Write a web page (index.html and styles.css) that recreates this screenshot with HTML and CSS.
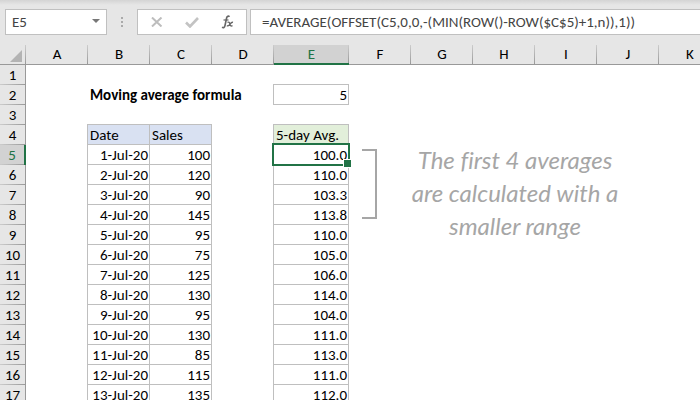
FILE: index.html
```html
<!DOCTYPE html>
<html lang="en">
<head>
    <meta charset="UTF-8">
    <meta name="viewport" content="width=device-width, initial-scale=1.0">
    <title>Moving average formula</title>
    <link rel="stylesheet" href="styles.css">
</head>
<body>
    <div class="formula-bar">
        <div class="namebox">
            <input type="text" class="name-input" value="E5" aria-label="Name box">
            <button type="button" class="name-arrow" aria-label="Show names">
                <svg width="8" height="4" viewBox="0 0 8 4"><path d="M0 0h8L4 4z" fill="#777"/></svg>
            </button>
        </div>
        <svg class="dots" width="2" height="10" viewBox="0 0 2 10" fill="#aaa"><path d="M0 0h2v2H0zM0 4h2v2H0zM0 8h2v2H0z"/></svg>
        <div class="tools">
            <button type="button" aria-label="Cancel">
                <svg width="12" height="10" viewBox="0 0 12 10"><path d="M1 .5l9.500 9M10.500 .5l-9.500 9" stroke="#bdbdbd" stroke-width="2" fill="none"/></svg>
            </button>
            <button type="button" aria-label="Enter">
                <svg width="14" height="11" viewBox="0 0 14 11"><path d="M1 5.500l4 4L13 1" stroke="#c3c3c3" stroke-width="2.600" fill="none"/></svg>
            </button>
            <button type="button" aria-label="Insert function">
                <svg width="13" height="14" viewBox="0 0 13 14" fill="none" stroke="#666"><path d="M8.500 1.800C7.500 .5 6 1 5.600 3L4 10.500C3.600 12.600 2.500 13 1 12.200" stroke-width="1.600"/><path d="M2.500 5h5" stroke-width="1.200"/><path d="M6.500 7.300c1.400-.6 2 .2 2.300 1.700s1 2.500 2.700 1.700M12 7.300c-1.500-.4-2.200.7-3.200 2S7 11.300 5.800 10.700" stroke-width="1.300"/></svg>
            </button>
        </div>
        <input type="text" class="formula-input" value="=AVERAGE(OFFSET(C5,0,0,-(MIN(ROW()-ROW($C$5)+1,n)),1))" aria-label="Formula">
    </div>

    <div class="sheet">
        <table>
            <colgroup>
                <col class="col-head">
                <col span="4">
                <col class="col-wide">
                <col span="6">
            </colgroup>
            <thead>
                <tr>
                    <th class="corner"><svg width="12" height="12" viewBox="0 0 12 12"><path d="M12 0v12H0z" fill="#b3b3b3"/></svg></th>
                    <th>A</th><th>B</th><th>C</th><th>D</th><th class="active">E</th><th>F</th><th>G</th><th>H</th><th>I</th><th>J</th><th>K</th>
                </tr>
            </thead>
            <tbody>
                <tr><th>1</th><td colspan="11"></td></tr>
                <tr><th>2</th><td></td><td colspan="3" class="title">Moving average formula</td><td class="data">5</td><td colspan="6"></td></tr>
                <tr><th>3</th><td colspan="11"></td></tr>
                <tr><th>4</th><td></td><td class="data label blue">Date</td><td class="data label blue">Sales</td><td></td><td class="data label green">5-day Avg.</td><td colspan="6"></td></tr>
                <tr><th class="active">5</th><td></td><td class="data">1-Jul-20</td><td class="data">100</td><td></td><td class="data selected">100.0<span class="selection"></span></td><td colspan="6"></td></tr>
                <tr><th>6</th><td></td><td class="data">2-Jul-20</td><td class="data">120</td><td></td><td class="data">110.0</td><td colspan="6"></td></tr>
                <tr><th>7</th><td></td><td class="data">3-Jul-20</td><td class="data">90</td><td></td><td class="data">103.3</td><td colspan="6"></td></tr>
                <tr><th>8</th><td></td><td class="data">4-Jul-20</td><td class="data">145</td><td></td><td class="data">113.8</td><td colspan="6"></td></tr>
                <tr><th>9</th><td></td><td class="data">5-Jul-20</td><td class="data">95</td><td></td><td class="data">110.0</td><td colspan="6"></td></tr>
                <tr><th>10</th><td></td><td class="data">6-Jul-20</td><td class="data">75</td><td></td><td class="data">105.0</td><td colspan="6"></td></tr>
                <tr><th>11</th><td></td><td class="data">7-Jul-20</td><td class="data">125</td><td></td><td class="data">106.0</td><td colspan="6"></td></tr>
                <tr><th>12</th><td></td><td class="data">8-Jul-20</td><td class="data">130</td><td></td><td class="data">114.0</td><td colspan="6"></td></tr>
                <tr><th>13</th><td></td><td class="data">9-Jul-20</td><td class="data">95</td><td></td><td class="data">104.0</td><td colspan="6"></td></tr>
                <tr><th>14</th><td></td><td class="data">10-Jul-20</td><td class="data">130</td><td></td><td class="data">111.0</td><td colspan="6"></td></tr>
                <tr><th>15</th><td></td><td class="data">11-Jul-20</td><td class="data">85</td><td></td><td class="data">113.0</td><td colspan="6"></td></tr>
                <tr><th>16</th><td></td><td class="data">12-Jul-20</td><td class="data">115</td><td></td><td class="data">111.0</td><td colspan="6"></td></tr>
                <tr><th>17</th><td></td><td class="data">13-Jul-20</td><td class="data">135</td><td></td><td class="data">112.0</td><td colspan="6"></td></tr>
            </tbody>
        </table>
        <div class="bracket"></div>
        <p class="note">The first 4 averages<br>are calculated with a<br>smaller range</p>
    </div>
</body>
</html>
```
FILE: styles.css
```css
* {
    box-sizing: border-box;
}
body {
    margin: 0;
    height: 100vh;
    display: flex;
    flex-direction: column;
    overflow: hidden;
    background: #fff;
    color: #000;
    font-family: Calibri, Carlito, Lato, sans-serif;
    font-size: 15px;
}
input, button {
    margin: 0;
    padding: 0;
    border: none;
    background: none;
    font: inherit;
    color: #444;
}

/* formula bar */
.formula-bar {
    flex: none;
    display: flex;
    align-items: center;
    padding: 9px 0 10px 5px;
    background: linear-gradient(#d4d4d4, #e6e6e6 5px);
}
.namebox {
    display: flex;
    width: 102px;
    height: 26px;
    border: 1px solid #c0c0c0;
    background: #fff;
}
.name-input {
    flex: 1;
    min-width: 0;
    padding-left: 6px;
}
.name-arrow {
    width: 20px;
    display: flex;
    align-items: center;
    justify-content: center;
    padding-bottom: 2px;
}
.dots {
    margin: 0 14px;
}
.tools {
    display: flex;
    width: 110px;
    height: 26px;
    padding: 0 1px;
    border: 1px solid #c0c0c0;
    background: #fff;
}
.tools button {
    flex: 1;
    display: flex;
    align-items: center;
    justify-content: center;
}
.formula-input {
    flex: 1;
    min-width: 0;
    height: 26px;
    margin-left: 3px;
    padding-left: 11px;
    border: 1px solid #c0c0c0;
    border-right: none;
    background: #fff;
}

/* grid */
.sheet {
    position: relative;
    flex: 1;
    min-height: 0;
    overflow: hidden;
}
table {
    table-layout: fixed;
    width: 721px;
    border-collapse: separate;
    border-spacing: 0;
}
col {
    width: 62px;
}
.col-head {
    width: 26px;
}
.col-wide {
    width: 75px;
}
tr {
    height: 20px;
}
th, td {
    height: 20px;
    padding: 0;
    line-height: 19px;
    white-space: nowrap;
}
th {
    font-weight: normal;
    text-align: center;
    background: #e6e6e6;
}
thead th {
    border-bottom: 1px solid #999;
    background: linear-gradient(#ccc, #999) right / 1px 100% no-repeat #e6e6e6;
}
tbody th {
    border-right: 1px solid #999;
    background: linear-gradient(to right, #ccc, #999) bottom / 100% 1px no-repeat #e6e6e6;
}
th.active {
    color: #217346;
    background-color: #d2d2d2;
}
thead th.active {
    border-bottom: 2px solid #217346;
    line-height: 18px;
}
tbody th.active {
    border-right: 2px solid #217346;
}
.corner svg {
    display: block;
    margin: 2px 0 0 10px;
}
.title {
    padding-left: 2px;
    font-weight: bold;
}
.data {
    padding: 1px 1px 0 2px;
    line-height: 18px;
    text-align: right;
    border-right: 1px solid #bfbfbf;
    border-bottom: 1px solid #bfbfbf;
    box-shadow: -1px 0 #bfbfbf, 0 -1px #bfbfbf, -1px -1px #bfbfbf;
}
.label {
    text-align: left;
}
.blue {
    background: #d9e1f2;
}
.green {
    background: #e2efda;
}
.selected {
    position: relative;
}
.selection {
    position: absolute;
    z-index: 1;
    top: -2px;
    right: -2px;
    bottom: -2px;
    left: -2px;
    border: 2px solid #217346;
}
.selection::after {
    content: "";
    position: absolute;
    right: -4px;
    bottom: -4px;
    width: 7px;
    height: 7px;
    border: 1px solid #fff;
    background: #217346;
}

/* annotation over the cells */
.bracket {
    position: absolute;
    top: 104px;
    left: 362px;
    width: 15px;
    height: 70px;
    border: 2px solid #a6a6a6;
    border-left: none;
}
.note {
    position: absolute;
    top: 98px;
    left: 405px;
    width: 220px;
    margin: 0;
    text-align: center;
    white-space: nowrap;
    font-family: "Segoe Print", "Bradley Hand", Lato, sans-serif;
    font-style: italic;
    font-size: 24px;
    font-variant-ligatures: none;
    line-height: 33px;
    color: #a6a6a6;
}
```
